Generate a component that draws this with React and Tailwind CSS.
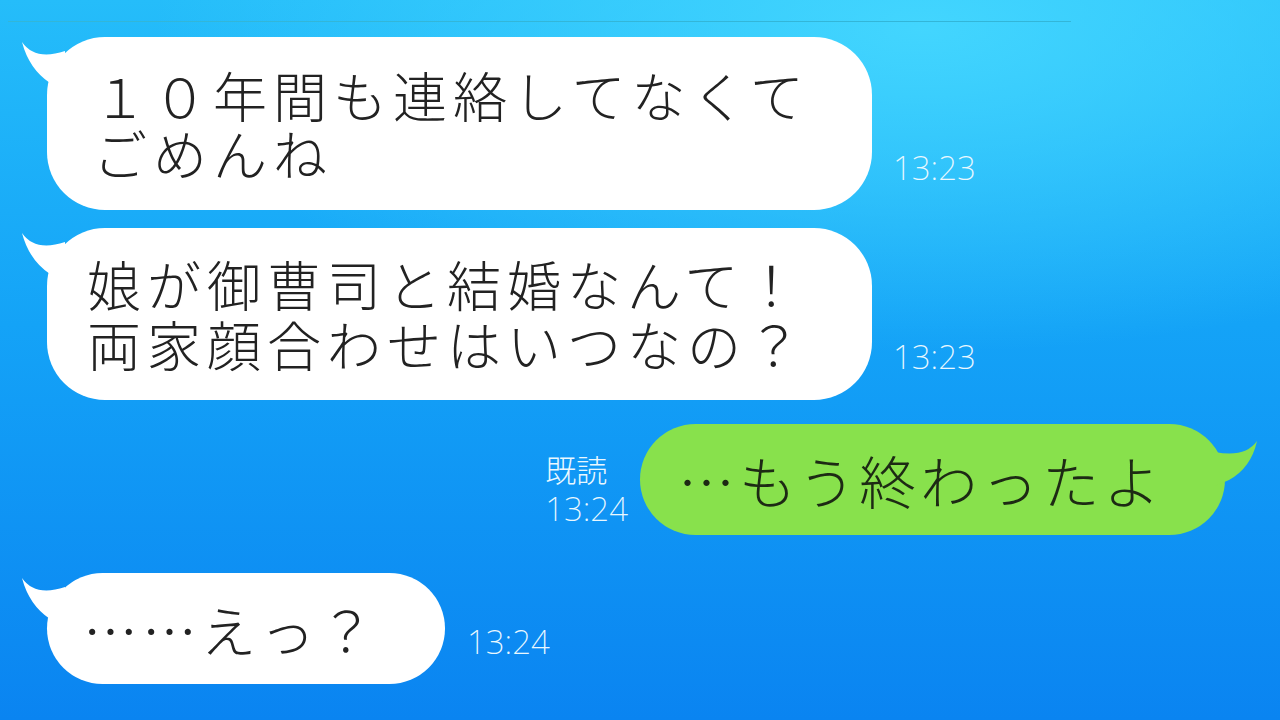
import React from "react";

const JP = { fontFamily: '"Noto Sans CJK JP", "Noto Sans", sans-serif' };
const NUM = { fontFamily: '"Noto Sans", "Noto Sans CJK JP", sans-serif' };

function LeftTail() {
  return (
    <svg className="absolute left-[-30px] top-0" width="50" height="64" viewBox="0 0 50 64">
      <path d="M5 5 Q18 24 48 14 L48 60 L33 46 Q12 32 5 5 Z" fill="#ffffff" />
    </svg>
  );
}

function RightTail() {
  return (
    <svg className="absolute right-[-36px] top-0" width="50" height="64" viewBox="0 0 50 64">
      <path d="M46 17 Q34 34 4 28 L4 62 L18 56 Q40 44 46 17 Z" fill="#88e14c" />
    </svg>
  );
}

function Time({ children, className = "" }) {
  return (
    <div className={`text-[33px] font-extralight leading-none text-[#eaf8ff] ${className}`} style={NUM}>
      {children}
    </div>
  );
}

export default function App() {
  return (
    <div
      className="relative w-[1280px] h-[720px] overflow-hidden bg-[radial-gradient(ellipse_60%_45%_at_72%_4%,rgba(72,218,255,0.85),rgba(72,218,255,0)_100%),linear-gradient(180deg,#25bdfa_0%,#14a3f7_45%,#0a84f1_100%)]"
    >
      <div className="pt-[21px] pl-[8px]">
        <div className="w-[1063px] h-[1px] bg-[#33b6d8]" />
      </div>

      <div className="flex flex-col pl-[47px] pt-[15px]">
        {/* Bubble 1 */}
        <div className="flex items-end">
          <div className="relative w-[825px] h-[173px] rounded-[58px] bg-white flex items-center pl-[46px]">
            <LeftTail />
            <div className="text-[54px] leading-[58px] tracking-[6px] text-[#222222] font-extralight" style={JP}>
              <div>１０年間も連絡してなくて</div>
              <div>ごめんね</div>
            </div>
          </div>
          <Time className="ml-[21px] mb-[26px]">13:23</Time>
        </div>

        {/* Bubble 2 */}
        <div className="flex items-end mt-[18px]">
          <div className="relative w-[825px] h-[172px] rounded-[58px] bg-white flex items-center pl-[40px]">
            <LeftTail />
            <div className="text-[54px] leading-[60px] tracking-[6px] text-[#222222] font-extralight" style={JP}>
              <div>娘が御曹司と結婚なんて！</div>
              <div>両家顔合わせはいつなの？</div>
            </div>
          </div>
          <Time className="ml-[21px] mb-[27px]">13:23</Time>
        </div>

        {/* Green bubble */}
        <div className="flex items-end justify-end mt-[24px] pr-[55px]">
          <div className="flex flex-col items-start mr-[12px] mb-[6px] text-[#eaf8ff]">
            <div className="text-[31px] leading-[40px] font-extralight" style={JP}>既読</div>
            <div className="text-[33px] leading-[40px] font-extralight" style={NUM}>13:24</div>
          </div>
          <div className="relative w-[585px] h-[111px] rounded-[56px] bg-[#88e14c] flex items-center pl-[38px]">
            <RightTail />
            <div className="text-[57px] leading-none tracking-[4px] text-[#1d2a14] font-extralight" style={JP}>
              …もう終わったよ
            </div>
          </div>
        </div>

        {/* Bubble 4 */}
        <div className="flex items-end mt-[38px]">
          <div className="relative w-[398px] h-[111px] rounded-[56px] bg-white flex items-center pl-[36px]">
            <LeftTail />
            <div className="text-[55px] leading-none tracking-[4px] text-[#222222] font-extralight" style={JP}>
              ……えっ？
            </div>
          </div>
          <Time className="ml-[22px] mb-[26px]">13:24</Time>
        </div>
      </div>
    </div>
  );
}
